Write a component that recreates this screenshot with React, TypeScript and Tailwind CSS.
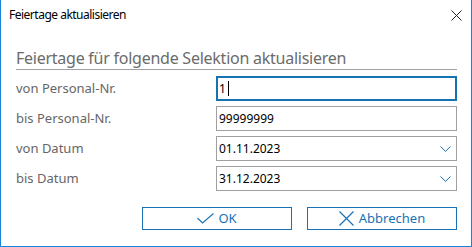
const blue = "#1a72b4";

function Chevron() {
  return (
    <svg width="11" height="6" viewBox="0 0 11 6" className="text-[#1a72b4]">
      <path d="M0.5 0.5 L5.5 5.3 L10.5 0.5" fill="none" stroke="currentColor" strokeWidth="1" />
    </svg>
  );
}

function Field({ value, focused, combo }: { value: string; focused?: boolean; combo?: boolean }) {
  return (
    <div
      className={
        focused
          ? "h-[25px] flex items-center border-2 border-[#1672b0] pl-[1px] pr-[5px] text-[12px] text-black"
          : "h-[25px] flex items-center border border-[#a0a0a0] pl-[2px] pr-[5px] text-[12px] text-black"
      }
    >
      <span className="flex-1 flex items-center">
        {value}
        {focused && <span className="ml-[2px] inline-block w-px h-[15px] bg-black" />}
      </span>
      {combo && <Chevron />}
    </div>
  );
}

const rows = [
  { label: "von Personal-Nr.", value: "1", focused: true },
  { label: "bis Personal-Nr.", value: "99999999" },
  { label: "von Datum", value: "01.11.2023", combo: true },
  { label: "bis Datum", value: "31.12.2023", combo: true },
];

export default function App() {
  return (
    <div
      className="w-[472px] h-[247px] bg-white border-x border-b border-[#1883d7] flex flex-col"
      style={{ fontFamily: '"Noto Sans", "Open Sans", sans-serif' }}
    >
      <div className="h-[30px] flex items-center justify-between pl-[8px] pr-[9px] text-[12px] tracking-[-0.5px] text-black">
        <span>Feiertage aktualisieren</span>
        <svg width="11" height="11" viewBox="0 0 11 11">
          <path d="M0.5 0.5 L10.5 10.5 M10.5 0.5 L0.5 10.5" stroke="#222" strokeWidth="1" />
        </svg>
      </div>
      <div className="flex flex-col pl-[15px] pr-[14px]">
        <div className="mt-[17px] leading-[22px] text-[16px] tracking-[-0.25px] text-[#6b6b6b] border-b border-[#a0a0a0]">
          Feiertage für folgende Selektion aktualisieren
        </div>
        <div className="mt-[6px] grid grid-cols-[200px_1fr] gap-y-[5px]">
          {rows.map((r) => (
            <div key={r.label} className="contents">
              <div className="h-[25px] flex items-center text-[13px] text-[#666666]">{r.label}</div>
              <Field value={r.value} focused={r.focused} combo={r.combo} />
            </div>
          ))}
        </div>
        <div className="mt-[16px] flex justify-end gap-[15px]">
          <button className="w-[150px] h-[23px] border border-[#1a72b4] flex items-center justify-center gap-[4px] text-[13px] text-[#1a72b4]">
            <svg width="17" height="11" viewBox="0 0 17 11">
              <path d="M0.5 5 L5.5 10 L16.5 0.5" fill="none" stroke={blue} strokeWidth="1.1" />
            </svg>
            OK
          </button>
          <button className="w-[150px] h-[23px] border border-[#1a72b4] flex items-center justify-center gap-[5px] text-[13px] text-[#1a72b4]">
            <svg width="15" height="15" viewBox="0 0 15 15">
              <path d="M0.5 0.5 L14.5 14.5 M14.5 0.5 L0.5 14.5" stroke={blue} strokeWidth="1.2" />
            </svg>
            Abbrechen
          </button>
        </div>
      </div>
    </div>
  );
}
